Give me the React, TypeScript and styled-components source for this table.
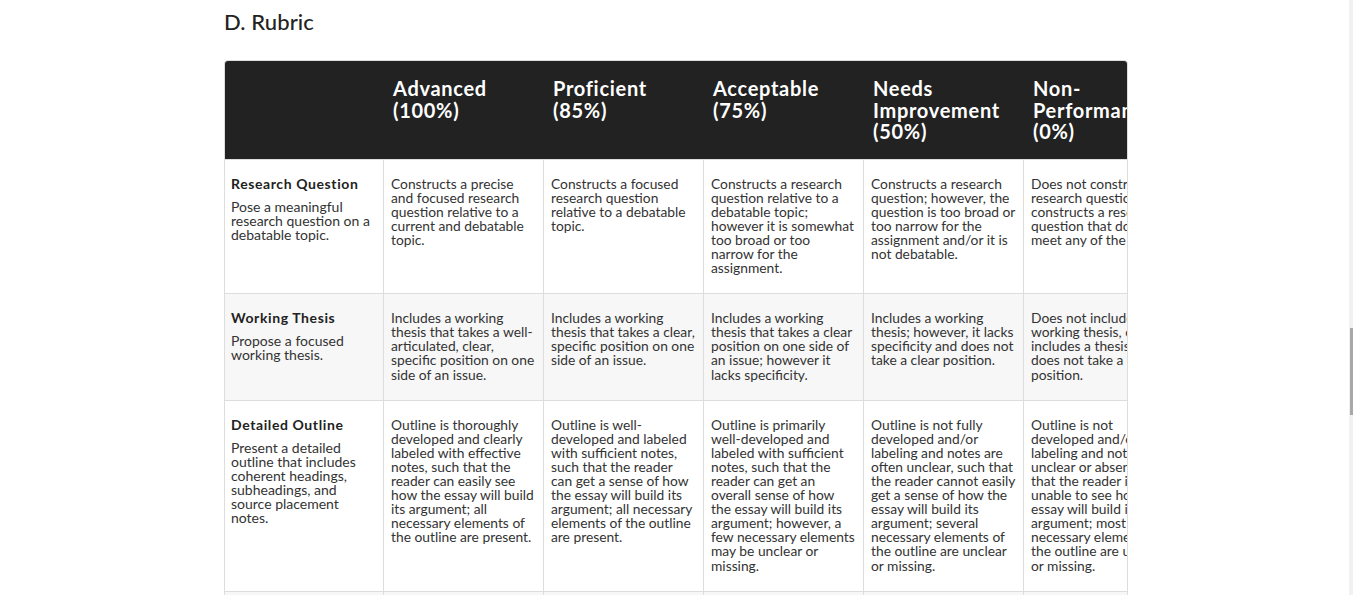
import React from 'react';
import { styled, createGlobalStyle } from 'styled-components';

interface Criterion {
	title: string;
	desc: string;
	levels: string[];
}

const levels = ['Advanced (100%)', 'Proficient (85%)', 'Acceptable (75%)', 'Needs Improvement (50%)', 'Non-Performance (0%)'];

const criteria: Criterion[] = [
	{
		title: 'Research Question',
		desc: 'Pose a meaningful research question on a debatable topic.',
		levels: [
			'Constructs a precise and focused research question relative to a current and debatable topic.',
			'Constructs a focused research question relative to a debatable topic.',
			'Constructs a research question relative to a debatable topic; however it is somewhat too broad or too narrow for the assignment.',
			'Constructs a research question; however, the question is too broad or too narrow for the assignment and/or it is not debatable.',
			'Does not construct a research question, or constructs a research question that does not meet any of the criteria.',
		],
	},
	{
		title: 'Working Thesis',
		desc: 'Propose a focused working thesis.',
		levels: [
			'Includes a working thesis that takes a well-articulated, clear, specific position on one side of an issue.',
			'Includes a working thesis that takes a clear, specific position on one side of an issue.',
			'Includes a working thesis that takes a clear position on one side of an issue; however it lacks specificity.',
			'Includes a working thesis; however, it lacks specificity and does not take a clear position.',
			'Does not include a working thesis, or includes a thesis that does not take a clear position.',
		],
	},
	{
		title: 'Detailed Outline',
		desc: 'Present a detailed outline that includes coherent headings, subheadings, and source placement notes.',
		levels: [
			'Outline is thoroughly developed and clearly labeled with effective notes, such that the reader can easily see how the essay will build its argument; all necessary elements of the outline are present.',
			'Outline is well-developed and labeled with sufficient notes, such that the reader can get a sense of how the essay will build its argument; all necessary elements of the outline are present.',
			'Outline is primarily well-developed and labeled with sufficient notes, such that the reader can get an overall sense of how the essay will build its argument; however, a few necessary elements may be unclear or missing.',
			'Outline is not fully developed and/or labeling and notes are often unclear, such that the reader cannot easily get a sense of how the essay will build its argument; several necessary elements of the outline are unclear or missing.',
			'Outline is not developed and/or labeling and notes are unclear or absent, such that the reader is unable to see how the essay will build its argument; most necessary elements of the outline are unclear or missing.',
		],
	},
	{
		title: 'Annotated Sources',
		desc: 'Provide annotations for each source that will be used in the essay.',
		levels: [
			'Annotations clearly summarize each source and explain how it will support the argument.',
			'Annotations summarize each source and explain how it will support the argument.',
			'Annotations summarize most sources; some explanations are unclear.',
			'Annotations are incomplete or unclear for many sources.',
			'Does not include annotations.',
		],
	},
];

const GlobalStyle = createGlobalStyle`
	html, body {
		margin: 0;
		padding: 0;
		background: #fff;
		overflow: hidden;
	}
	body {
		font-family: Lato, 'Liberation Sans', sans-serif;
		color: #333;
	}
`;

function App() {
	return (
		<>
			<GlobalStyle />
			<Page>
				<Section>
					<Title>D. Rubric</Title>
					<TableWrap>
						<Table>
							<colgroup>
								<col style={{ width: 159 }} />
								{levels.map((l) => (
									<col key={l} style={{ width: 160 }} />
								))}
							</colgroup>
							<thead>
								<tr>
									<HeadCell />
									{levels.map((l) => (
										<HeadCell key={l}>{l}</HeadCell>
									))}
								</tr>
							</thead>
							<tbody>
								{criteria.map((c, i) => (
									<Row key={c.title} $striped={i % 2 === 1}>
										<Cell>
											<CriterionTitle>{c.title}</CriterionTitle>
											<CriterionDesc>{c.desc}</CriterionDesc>
										</Cell>
										{c.levels.map((text, j) => (
											<Cell key={j}>{text}</Cell>
										))}
									</Row>
								))}
							</tbody>
						</Table>
					</TableWrap>
				</Section>
			</Page>
			<ScrollTrack>
				<ScrollThumb />
			</ScrollTrack>
		</>
	);
}

const Page = styled.div`
	width: 1352px;
	padding-top: 9px;
	display: flex;
	justify-content: center;
`;
const Section = styled.section`
	width: 904px;
`;
const Title = styled.h2`
	margin: 0 0 26px;
	font-size: 22px;
	line-height: 25px;
	font-weight: 500;
	color: #222;
	letter-spacing: 0.1px;
`;
const TableWrap = styled.div`
	width: 904px;
	box-sizing: border-box;
	border: 1px solid #ddd;
	border-bottom: none;
	border-radius: 4px 4px 0 0;
	overflow: hidden;
`;
const Table = styled.table`
	width: 959px;
	table-layout: fixed;
	border-collapse: separate;
	border-spacing: 0;
`;
const HeadCell = styled.th`
	background: #222;
	color: #fff;
	text-align: left;
	vertical-align: top;
	padding: 17px 10px 16px 9px;
	font-size: 20px;
	line-height: 21.5px;
	font-weight: 700;
	letter-spacing: 0.7px;
	white-space: normal;
	overflow: hidden;
	&:first-child {
		padding-left: 6px;
	}
`;
const Row = styled.tr<{ $striped: boolean }>`
	background: ${({ $striped }) => ($striped ? '#f7f7f7' : '#fff')};
`;
const Cell = styled.td`
	vertical-align: top;
	padding: 17px 7px 18px;
	border-top: 1px solid #ddd;
	border-right: 1px solid #ddd;
	font-size: 13.8px;
	line-height: 14.1px;
	color: #333;
	overflow: hidden;
	&:first-child {
		padding-left: 6px;
	}
`;
const CriterionTitle = styled.div`
	font-size: 14px;
	font-weight: 700;
	color: #222;
	letter-spacing: 0.6px;
	margin-bottom: 9px;
`;
const CriterionDesc = styled.div`
	font-size: 14px;
	color: #333;
`;
const ScrollTrack = styled.div`
	position: fixed;
	top: 0;
	right: 0;
	width: 4px;
	height: 100%;
	background: #f1f1f1;
`;
const ScrollThumb = styled.div`
	position: absolute;
	top: 328px;
	right: 0;
	width: 3px;
	height: 87px;
	background: #a8a8a8;
`;

export default App;
